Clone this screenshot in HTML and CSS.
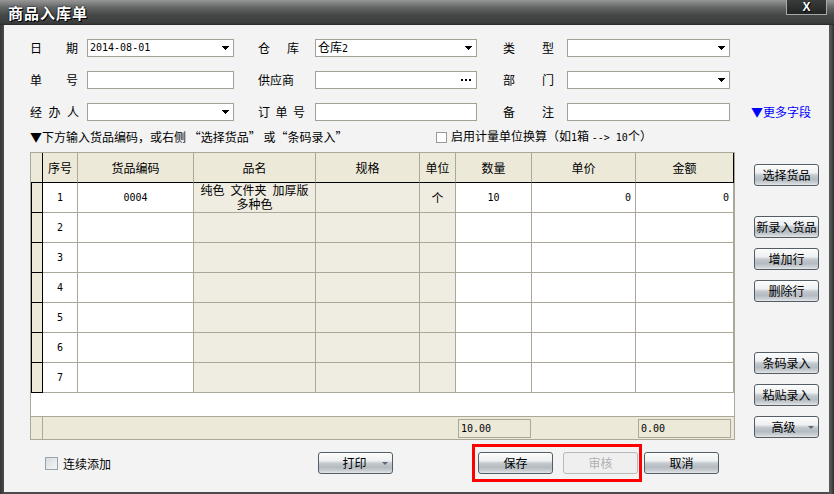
FILE: index.html
```html
<!DOCTYPE html>
<html lang="zh-CN">
<head>
<meta charset="utf-8">
<title>商品入库单</title>
<link rel="stylesheet" href="styles.css">
</head>
<body>
<div class="window">
  <div class="titlebar">
    <div class="title">商品入库单</div>
    <div class="close">X</div>
  </div>
  <div class="client">
    <div class="form">
      <div class="frow">
        <span class="lbl l1 g24"><i>日</i><i>期</i></span>
        <div class="inp w1"><span class="n">2014-08-01</span><svg class="dd" width="7" height="4" viewBox="0 0 7 4"><polygon points="0,0 7,0 3.5,4" fill="#000"/></svg></div>
        <span class="lbl l2 g17"><i>仓</i><i>库</i></span>
        <div class="inp w2"><span>仓库<span class="n">2</span></span><svg class="dd" width="7" height="4" viewBox="0 0 7 4"><polygon points="0,0 7,0 3.5,4" fill="#000"/></svg></div>
        <span class="lbl l3 g27"><i>类</i><i>型</i></span>
        <div class="inp w3"><span></span><svg class="dd" width="7" height="4" viewBox="0 0 7 4"><polygon points="0,0 7,0 3.5,4" fill="#000"/></svg></div>
      </div>
      <div class="frow">
        <span class="lbl l1 g24"><i>单</i><i>号</i></span>
        <div class="inp w1"></div>
        <span class="lbl l2"><i>供应商</i></span>
        <div class="inp w2"><span></span><svg class="dots" width="10" height="2" viewBox="0 0 10 2"><rect x="0" y="0" width="2" height="2" fill="#000"/><rect x="4" y="0" width="2" height="2" fill="#000"/><rect x="8" y="0" width="2" height="2" fill="#000"/></svg></div>
        <span class="lbl l3 g27"><i>部</i><i>门</i></span>
        <div class="inp w3"><span></span><svg class="dd" width="7" height="4" viewBox="0 0 7 4"><polygon points="0,0 7,0 3.5,4" fill="#000"/></svg></div>
      </div>
      <div class="frow">
        <span class="lbl l1 g6"><i>经</i><i>办</i><i>人</i></span>
        <div class="inp w1"><span></span><svg class="dd" width="7" height="4" viewBox="0 0 7 4"><polygon points="0,0 7,0 3.5,4" fill="#000"/></svg></div>
        <span class="lbl l2 g5"><i>订</i><i>单</i><i>号</i></span>
        <div class="inp w2"></div>
        <span class="lbl l3 g27"><i>备</i><i>注</i></span>
        <div class="inp w3"></div>
        <span class="more">▼更多字段</span>
      </div>
    </div>

    <div class="hint">
      <span class="hint-text">▼下方输入货品编码，或右侧 “选择货品” 或“条码录入”</span>
      <span class="cb"></span>
      <span class="cb-text">启用计量单位换算（如<span class="n">1</span>箱 <span class="n">--&gt; 10</span>个）</span>
    </div>

    <div class="main">
      <div class="grid">
        <div class="gr ghead">
          <div class="c ind"></div>
          <div class="c">序号</div>
          <div class="c">货品编码</div>
          <div class="c">品名</div>
          <div class="c">规格</div>
          <div class="c">单位</div>
          <div class="c">数量</div>
          <div class="c">单价</div>
          <div class="c last">金额</div>
        </div>
        <div class="gr grow">
          <div class="c ind"></div>
          <div class="c n">1</div>
          <div class="c n">0004</div>
          <div class="c bg name">纯色&#8194;文件夹&#8194;加厚版<br>多种色</div>
          <div class="c bg"></div>
          <div class="c bg">个</div>
          <div class="c n">10</div>
          <div class="c n rt">0</div>
          <div class="c n rt">0</div>
        </div>
        <div class="gr grow">
          <div class="c ind"></div><div class="c n">2</div><div class="c"></div><div class="c bg"></div><div class="c bg"></div><div class="c bg"></div><div class="c"></div><div class="c"></div><div class="c"></div>
        </div>
        <div class="gr grow">
          <div class="c ind"></div><div class="c n">3</div><div class="c"></div><div class="c bg"></div><div class="c bg"></div><div class="c bg"></div><div class="c"></div><div class="c"></div><div class="c"></div>
        </div>
        <div class="gr grow">
          <div class="c ind"></div><div class="c n">4</div><div class="c"></div><div class="c bg"></div><div class="c bg"></div><div class="c bg"></div><div class="c"></div><div class="c"></div><div class="c"></div>
        </div>
        <div class="gr grow">
          <div class="c ind"></div><div class="c n">5</div><div class="c"></div><div class="c bg"></div><div class="c bg"></div><div class="c bg"></div><div class="c"></div><div class="c"></div><div class="c"></div>
        </div>
        <div class="gr grow">
          <div class="c ind"></div><div class="c n">6</div><div class="c"></div><div class="c bg"></div><div class="c bg"></div><div class="c bg"></div><div class="c"></div><div class="c"></div><div class="c"></div>
        </div>
        <div class="gr grow">
          <div class="c ind"></div><div class="c n">7</div><div class="c"></div><div class="c bg"></div><div class="c bg"></div><div class="c bg"></div><div class="c"></div><div class="c"></div><div class="c"></div>
        </div>
        <div class="gempty"></div>
        <div class="gr gfoot">
          <div class="f ind"></div><div class="f"></div><div class="f"></div><div class="f"></div><div class="f"></div><div class="f"></div>
          <div class="f"><span class="sum n">10.00</span></div>
          <div class="f"></div>
          <div class="f"><span class="sum sum2 n">0.00</span></div>
        </div>
      </div>

      <div class="side">
        <div class="btn b1">选择货品</div>
        <div class="btn b2">新录入货品</div>
        <div class="btn b3">增加行</div>
        <div class="btn b3">删除行</div>
        <div class="btn b5">条码录入</div>
        <div class="btn b3">粘贴录入</div>
        <div class="btn b3 split"><span class="bt">高级</span><span class="arr"></span></div>
      </div>
    </div>

    <div class="bottom">
      <div class="chk-group"><span class="cb2"></span><span>连续添加</span></div>
      <div class="btn wide split"><span class="bt">打印</span><span class="arr"></span></div>
      <div class="mark">
        <div class="btn wide">保存</div>
        <div class="btn wide disabled">审核</div>
      </div>
      <div class="btn wide cancel">取消</div>
    </div>
  </div>
</div>
</body>
</html>
```

FILE: styles.css
```css
* { box-sizing: border-box; }
html, body { margin: 0; padding: 0; }
body {
  width: 834px;
  height: 494px;
  overflow: hidden;
  font-family: "Noto Sans CJK SC", "Noto Sans", sans-serif;
  font-size: 12px;
  color: #000;
  background: #3e4040;
}
.window {
  width: 834px;
  height: 494px;
  display: flex;
  flex-direction: column;
  background: linear-gradient(90deg, #353737 0, #4a4c4c 4px, #4a4c4c 828px, #5a5c5c 830px, #2e3030 834px);
}
.titlebar {
  height: 25px;
  flex: none;
  display: flex;
  justify-content: space-between;
  align-items: flex-start;
  background: linear-gradient(#979797 0%, #646666 30%, #464848 60%, #3c3e3e 92%, #262828 100%);
}
.title {
  color: #fff;
  font-weight: bold;
  font-size: 15px;
  line-height: 25px;
  padding-left: 8px;
  text-shadow: 0 0 2px #000, 1px 1px 0 #000;
  letter-spacing: 1px;
}
.close {
  width: 41px;
  height: 15px;
  margin-right: 7px;
  background: linear-gradient(#3a3c3c, #232525);
  border: 1px solid #a8a8a8;
  border-top: none;
  color: #fff;
  font-family: "Liberation Sans", sans-serif;
  font-weight: bold;
  font-size: 12px;
  line-height: 14px;
  text-align: center;
  text-shadow: 0 0 1px #000, 1px 1px 0 #000;
}
.client {
  flex: 1;
  margin: 0 5px 2px 4px;
  background: #f3f3f3;
  display: flex;
  flex-direction: column;
}
.n {
  font-family: "DejaVu Sans Mono", "Liberation Mono", monospace;
  font-size: 10px;
}

/* form */
.form {
  padding: 14px 0 0 26px;
  display: flex;
  flex-direction: column;
  gap: 14px;
}
.frow {
  display: flex;
  align-items: center;
  height: 18px;
}
.lbl {
  white-space: nowrap;
  line-height: 18px;
  flex: none;
  display: flex;
}
.lbl i { font-style: normal; }
.l1 { width: 57px; }
.l2 { width: 57px; margin-left: 24px; }
.l3 { width: 64px; margin-left: 26px; }
.g24 { gap: 24px; }
.g17 { gap: 17px; }
.g27 { gap: 27px; }
.g6 { gap: 6.5px; }
.g5 { gap: 5.5px; }
.inp {
  flex: none;
  height: 18px;
  background: #fff;
  border: 1px solid #a3a193;
  display: flex;
  align-items: center;
  justify-content: space-between;
  padding: 0 4px 0 2px;
  line-height: 16px;
}
.w1 { width: 147px; }
.w2 { width: 162px; }
.w3 { width: 163px; }
.dd, .dots { display: block; flex: none; shape-rendering: crispEdges; }
.dots { margin-right: 1px; }
.more {
  margin-left: 21px;
  color: #0000ff;
  line-height: 18px;
  white-space: nowrap;
}

/* hint */
.hint {
  margin-top: 8px;
  height: 16px;
  display: flex;
  align-items: center;
  padding-left: 26px;
  line-height: 16px;
  white-space: nowrap;
}
.hint-text { width: 406px; flex: none; }
.cb {
  width: 11px;
  height: 11px;
  border: 1px solid #9a9a9a;
  background: #fff;
  flex: none;
}
.cb-text { margin-left: 4px; }

/* main */
.main {
  margin-top: 7px;
  display: flex;
  padding-left: 26px;
}
.grid {
  width: 705px;
  height: 288px;
  border: 1px solid #aca899;
  background: #fff;
  flex: none;
  display: flex;
  flex-direction: column;
}
.gr {
  display: grid;
  grid-template-columns: 12px 35px 116px 122px 104px 36px 76px 104px 98px;
}
.c {
  height: 30px;
  border-right: 1px solid #aca899;
  border-bottom: 1px solid #aca899;
  display: flex;
  align-items: center;
  justify-content: center;
  white-space: nowrap;
}
.ghead .c {
  background: #ece9d8;
  border-bottom-color: #000;
}
.ghead .c.ind { border-right-color: #000; }
.ghead .c.last { border-right-color: #000; }
.grow .c.ind {
  background: #ece9d8;
  border-right-color: #000;
  border-bottom-color: #000;
  box-shadow: inset 1px 0 0 #000;
}
.c.bg { background: #efece1; }
.c.rt { justify-content: flex-end; padding-right: 4px; }
.c.name {
  display: block;
  text-align: center;
  line-height: 14px;
  white-space: nowrap;
}
.gempty { height: 23px; }
.gfoot {
  height: 23px;
  border-top: 1px solid #aca899;
  background: #ece9d8;
}
.f {
  height: 22px;
  padding: 2px 0 0 2px;
}
.f.ind { border-right: 1px solid #aca899; padding: 0; }
.sum {
  display: block;
  width: 73px;
  height: 19px;
  border: 1px solid #aca899;
  line-height: 17px;
  padding-left: 2px;
}
.sum2 { width: 93px; }

/* buttons */
.btn {
  height: 22px;
  border: 1px solid #535d66;
  border-radius: 3px;
  background: linear-gradient(#fbfcfc 0%, #eef0f1 38%, #c3c9ce 52%, #b4bbc1 72%, #c9ced2 88%, #e4e7e9 100%);
  box-shadow: inset 0 1px 0 #fff;
  display: flex;
  align-items: center;
  justify-content: center;
  line-height: 20px;
  white-space: nowrap;
  flex: none;
}
.side {
  margin-left: 19px;
  padding-top: 12px;
  display: flex;
  flex-direction: column;
  width: 65px;
}
.side .btn { width: 65px; }
.b2 { margin-top: 30px; }
.b3 { margin-top: 10px; }
.b5 { margin-top: 50px; }
.split { justify-content: flex-start; }
.split .bt { flex: 1; text-align: center; padding-left: 4px; }
.arr {
  width: 0;
  height: 0;
  border-left: 3px solid transparent;
  border-right: 3px solid transparent;
  border-top: 3px solid #606a72;
  margin-right: 4px;
  flex: none;
}

/* bottom */
.bottom {
  margin-top: 4px;
  height: 38px;
  display: flex;
  align-items: center;
  padding-left: 41px;
}
.chk-group {
  width: 273px;
  display: flex;
  align-items: center;
  flex: none;
}
.cb2 {
  width: 13px;
  height: 13px;
  border: 1px solid #9aa3ab;
  background: linear-gradient(135deg, #d8dcdf, #f4f5f6);
  margin-right: 5px;
  flex: none;
}
.btn.wide { width: 75px; }
.bottom .split .bt { padding-left: 8px; }
.mark {
  margin-left: 79px;
  width: 170px;
  height: 38px;
  border: 3px solid #ff0000;
  display: flex;
  align-items: center;
  padding: 0 0 0 3px;
  gap: 10px;
  flex: none;
}
.btn.disabled {
  background: #efefef;
  border-color: #b9b9b9;
  color: #b0b0b0;
  box-shadow: none;
}
.cancel { margin-left: 2px; }
```
